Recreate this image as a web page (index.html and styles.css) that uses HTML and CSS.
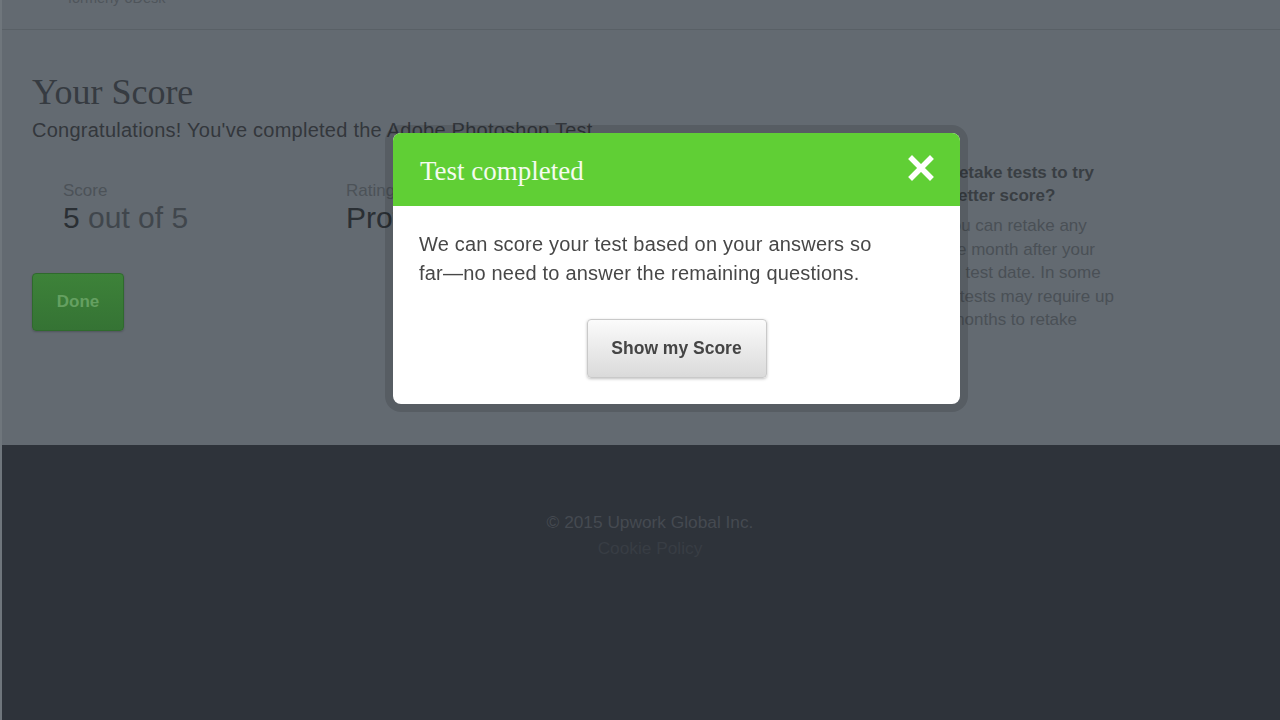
FILE: index.html
```html
<!DOCTYPE html>
<html lang="en">

<head>
    <meta charset="UTF-8">
    <meta name="viewport" content="width=device-width, initial-scale=1.0">
    <title>Your Score - Upwork</title>
    <link rel="stylesheet" href="styles.css">
</head>

<body>
    <div class="page">
        <header class="topbar">
            <span class="formerly">formerly oDesk</span>
        </header>

        <main class="content">
            <section class="result">
                <h1>Your Score</h1>
                <p class="intro">Congratulations! You've completed the Adobe Photoshop Test.</p>

                <div class="stats">
                    <div class="stat">
                        <span class="stat-label">Score</span>
                        <span class="stat-value"><b>5</b> out of 5</span>
                    </div>
                    <div class="stat stat-rating">
                        <span class="stat-label">Rating</span>
                        <span class="stat-value"><b>Proficient</b></span>
                    </div>
                </div>

                <button class="btn-done">Done</button>
            </section>

            <aside class="retake">
                <h3>Can I retake tests to try<br>for a better score?</h3>
                <p>Yes, you can retake any<br>test one month after your<br>original test date. In some<br>cases, tests may require up<br>to six months to retake</p>
            </aside>
        </main>

        <footer class="footer">
            <div>&copy; 2015 Upwork Global Inc.</div>
            <a href="#">Cookie Policy</a>
        </footer>
    </div>

    <!-- dialog shown over the page -->
    <div class="overlay">
        <div class="modal">
            <div class="modal-head">
                <h2>Test completed</h2>
                <button class="modal-close" aria-label="Close">
                    <svg width="26" height="26" viewBox="0 0 26 26">
                        <path d="M4 4 L22 22 M22 4 L4 22" stroke="#fff" stroke-width="5.5" stroke-linecap="square" />
                    </svg>
                </button>
            </div>
            <div class="modal-body">
                <p>We can score your test based on your answers so far&mdash;no need to answer the remaining questions.</p>
                <button class="btn-score">Show my Score</button>
            </div>
        </div>
    </div>
</body>

</html>
```

FILE: styles.css
```css
body {
    margin: 0;
    background-color: #636a71;
    font-family: "Liberation Sans", Arial, sans-serif;
    overflow: hidden;
}

.page {
    border-left: 2px solid #6f767c;
    /* thin light strip on the left edge */
}

.topbar {
    height: 29px;
    border-bottom: 1px solid #596066;
    padding-left: 66px;
    overflow: hidden;
}

.formerly {
    display: block;
    margin-top: -10px;
    font-size: 14.5px;
    line-height: 16px;
    color: #4f555b;
}

.content {
    height: 372px;
    padding: 43px 0 0 30px;
    display: grid;
    grid-template-columns: 874px 230px;
}

h1 {
    margin: 0;
    font-family: "Liberation Serif", Georgia, serif;
    font-weight: normal;
    font-size: 36px;
    line-height: 38px;
    color: #363b41;
}

.intro {
    margin: 8px 0 0;
    font-size: 20px;
    letter-spacing: 0.25px;
    line-height: 22px;
    color: #33373c;
}

.stats {
    display: flex;
    margin-top: 40px;
    padding-left: 31px;
}

.stat {
    display: flex;
    flex-direction: column;
    width: 283px;
}

.stat-label {
    font-size: 17px;
    line-height: 20px;
    color: #4c5258;
}

.stat-value {
    font-size: 30px;
    line-height: 34px;
    color: #40464c;
}

.stat-value b {
    font-weight: normal;
    color: #2a2f34;
}

.btn-done {
    margin-top: 38px;
    width: 92px;
    height: 58px;
    border: 1px solid #2f6a2d;
    border-radius: 4px;
    background: linear-gradient(#3d8239, #357334);
    color: #65a061;
    font-family: inherit;
    font-size: 17px;
    font-weight: bold;
    box-shadow: 0 1px 2px rgba(0, 0, 0, 0.2);
}

.retake {
    margin-top: 88px;
}

.retake h3 {
    margin: 0;
    font-size: 17px;
    line-height: 23px;
    color: #393e43;
}

.retake p {
    margin: 7px 0 0;
    font-size: 17px;
    line-height: 23.6px;
    color: #4a5056;
}

.footer {
    height: 211px;
    padding: 64px 0 0 18px;
    background-color: #2e333a;
    text-align: center;
    font-size: 17.3px;
    line-height: 26px;
    color: #454a51;
}

.footer a {
    color: #383d44;
    text-decoration: none;
}

/* modal */

.overlay {
    position: fixed;
    inset: 0;
}

.modal {
    position: absolute;
    left: 393px;
    top: 133px;
    width: 567px;
    height: 271px;
    background-color: #fff;
    border-radius: 8px;
    overflow: hidden;
    box-shadow: 0 0 0 8px rgba(0, 0, 0, 0.12);
}

.modal-head {
    height: 73px;
    display: flex;
    align-items: center;
    justify-content: space-between;
    padding: 0 26px 0 27px;
    background-color: #60cf35;
}

.modal-head h2 {
    margin: 4px 0 0;
    font-family: "Liberation Serif", Georgia, serif;
    font-weight: normal;
    font-size: 27px;
    color: #f5fbf0;
}

.modal-close {
    padding: 0;
    border: none;
    background: none;
    display: flex;
    margin-top: -4px;
}

.modal-body {
    padding: 24px 26px 0;
    text-align: center;
}

.modal-body p {
    margin: 0;
    max-width: 465px;
    text-align: left;
    font-size: 20px;
    letter-spacing: 0.2px;
    line-height: 29px;
    color: #474747;
}

.btn-score {
    margin-top: 31px;
    width: 180px;
    height: 59px;
    border: 1px solid #c9c9c9;
    border-radius: 4px;
    background: linear-gradient(#fbfbfb, #dadada);
    box-shadow: 0 1px 3px rgba(0, 0, 0, 0.25);
    font-family: inherit;
    font-size: 17.5px;
    font-weight: bold;
    color: #454545;
}
```
